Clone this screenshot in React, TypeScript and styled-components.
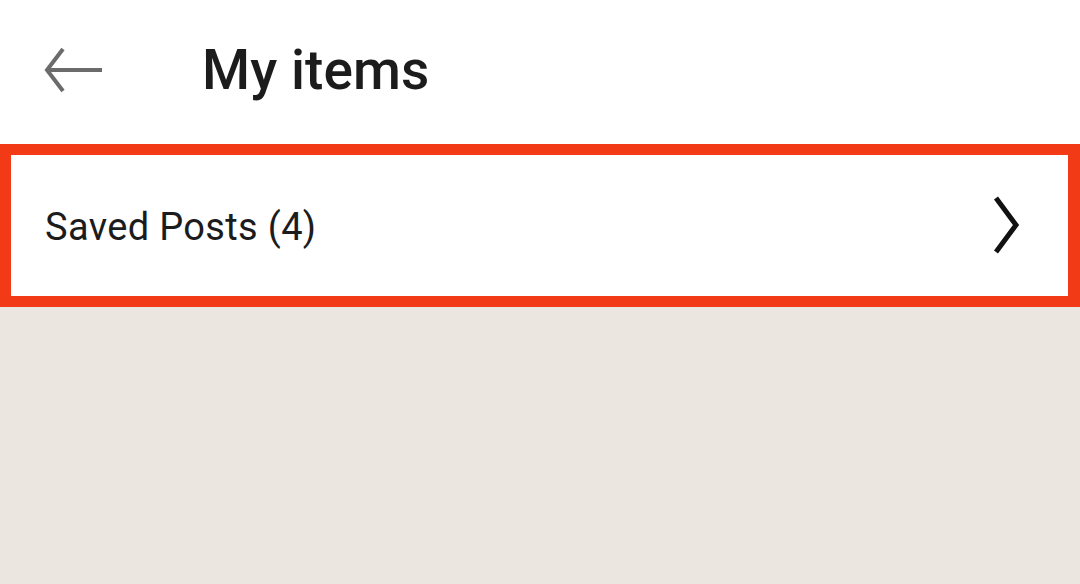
import styled, { createGlobalStyle } from 'styled-components';

const GlobalStyle = createGlobalStyle`
  html, body {
    margin: 0;
    padding: 0;
    background: #ebe6e0;
    font-family: Roboto, "Noto Sans", Arial, sans-serif;
  }
`;

const Page = styled.div`
  width: 1080px;
  height: 584px;
  background: #ebe6e0;
  display: flex;
  flex-direction: column;
`;

const Header = styled.header`
  height: 144px;
  background: #ffffff;
  display: flex;
  align-items: center;
  padding-left: 44px;
  box-sizing: border-box;
`;

const BackButton = styled.div`
  width: 60px;
  height: 46px;
  display: flex;
  align-items: center;
  margin-top: -4px;
`;

const Title = styled.h1`
  margin: -4px 0 0 98px;
  font-size: 55px;
  font-weight: 500;
  color: #1c1c1c;
  letter-spacing: 0.1px;
`;

const Row = styled.div`
  height: 163px;
  background: #ffffff;
  border: 11px solid #f23a17;
  border-right-width: 12px;
  box-sizing: border-box;
  display: flex;
  align-items: center;
  justify-content: space-between;
  padding: 0 47px 0 34px;
`;

const RowLabel = styled.span`
  font-size: 38px;
  font-weight: 400;
  color: #1c1c1c;
  letter-spacing: 0.35px;
  margin-top: 2px;
`;

const Chevron = styled.div`
  width: 30px;
  height: 60px;
  display: flex;
  margin-top: -2px;
`;

export default function App() {
  return (
    <>
      <GlobalStyle />
      <Page>
        <Header>
          <BackButton>
            <svg width="60" height="46" viewBox="0 0 60 46">
              <path
                d="M58 23H4M19 2L3 23L19 44"
                fill="none"
                stroke="#6b6b6b"
                strokeWidth="4"
              />
            </svg>
          </BackButton>
          <Title>My items</Title>
        </Header>
        <Row>
          <RowLabel>Saved Posts (4)</RowLabel>
          <Chevron>
            <svg width="30" height="60" viewBox="0 0 30 60">
              <path
                d="M5 3L25 30L5 57"
                fill="none"
                stroke="#111111"
                strokeWidth="5"
              />
            </svg>
          </Chevron>
        </Row>
      </Page>
    </>
  );
}
